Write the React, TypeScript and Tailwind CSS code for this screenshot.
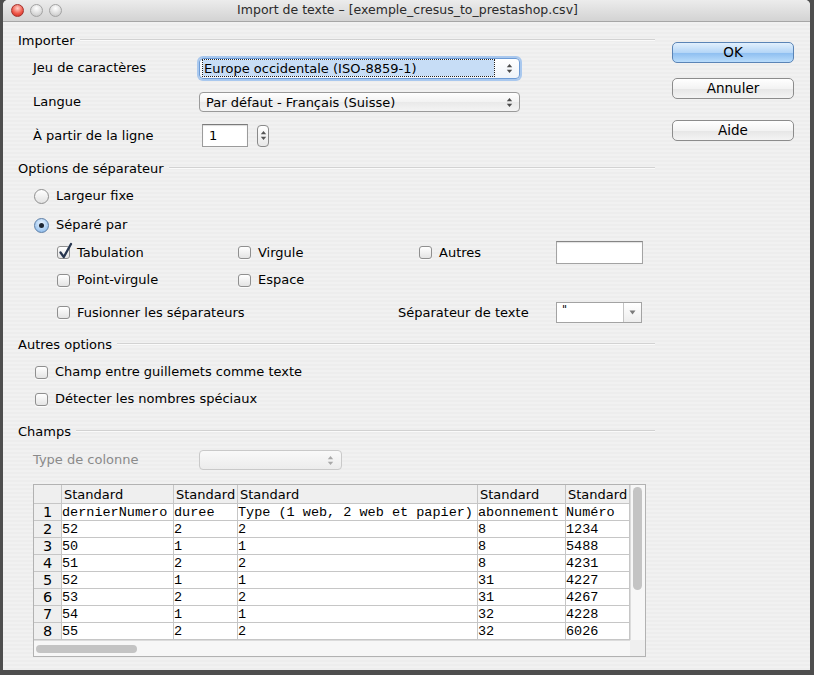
import React from 'react'

const sans = "font-['DejaVu_Sans',sans-serif]"
const mono = "font-['Liberation_Mono',monospace]"

const rows = [
  ['dernierNumero', 'duree', 'Type (1 web, 2 web et papier)', 'abonnement', 'Numéro'],
  ['52', '2', '2', '8', '1234'],
  ['50', '1', '1', '8', '5488'],
  ['51', '2', '2', '8', '4231'],
  ['52', '1', '1', '31', '4227'],
  ['53', '2', '2', '31', '4267'],
  ['54', '1', '1', '32', '4228'],
  ['55', '2', '2', '32', '6026'],
]

function UpDown({ color = '#4a4a4a' }: { color?: string }) {
  return (
    <svg width="7" height="11" viewBox="0 0 7 11">
      <path d="M3.5 1 L6.2 4.2 H0.8 Z" fill={color} />
      <path d="M3.5 10 L6.2 6.8 H0.8 Z" fill={color} />
    </svg>
  )
}

function SectionHeading({ title, className = '' }: { title: string; className?: string }) {
  return (
    <div className={`flex items-center h-[18px] ${className}`}>
      <span className="text-[13px] text-black leading-none">{title}</span>
      <div className="ml-[5px] flex-1 h-[2px] border-t border-b border-t-[#d2d2d2] border-b-[#fafafa]" />
    </div>
  )
}

function Checkbox({ checked = false }: { checked?: boolean }) {
  return (
    <span className="relative inline-block shrink-0 w-[13px] h-[13px] rounded-[3px] border border-[#8f8f8f] bg-[linear-gradient(#ffffff,#e4e4e4)] shadow-[0_1px_0_rgba(255,255,255,0.8)]">
      {checked && (
        <svg className="absolute left-[0px] top-[-5px]" width="16" height="18" viewBox="0 0 16 18">
          <path d="M2.5 10.5 L5.8 15 L13 2" fill="none" stroke="#27364f" strokeWidth="2.3" strokeLinecap="round" strokeLinejoin="round" />
        </svg>
      )}
    </span>
  )
}

function Radio({ checked = false }: { checked?: boolean }) {
  return checked ? (
    <span className="flex items-center justify-center shrink-0 w-[15px] h-[15px] rounded-full border border-[#5d7ea6] bg-[radial-gradient(circle_at_50%_35%,#eef6ff,#9ec6ef_70%,#7aaee6)]">
      <span className="w-[5px] h-[5px] rounded-full bg-[#1d2633]" />
    </span>
  ) : (
    <span className="shrink-0 w-[15px] h-[15px] rounded-full border border-[#8f8f8f] bg-[linear-gradient(#ffffff,#e2e2e2)]" />
  )
}

function CheckItem({ label, checked = false, className = '' }: { label: string; checked?: boolean; className?: string }) {
  return (
    <div className={`flex items-center ${className}`}>
      <Checkbox checked={checked} />
      <span className="ml-[7px] text-[13px] text-black">{label}</span>
    </div>
  )
}

function AquaButton({ label, primary = false, className = '' }: { label: string; primary?: boolean; className?: string }) {
  return (
    <div
      className={`flex items-center justify-center w-[122px] h-[21px] rounded-[5px] border text-[13.5px] text-black ${
        primary
          ? 'border-[#5a84b6] bg-[linear-gradient(#e2f0fd,#b5d6f7_50%,#8cbdf0_51%,#b9dcfb)]'
          : 'border-[#8c8c8c] bg-[linear-gradient(#ffffff,#f3f3f3_50%,#e6e6e6_51%,#f4f4f4)]'
      } ${className}`}
    >
      {label}
    </div>
  )
}

export default function App() {
  return (
    <div className={`w-[814px] h-[675px] bg-[#4e4e4e] overflow-hidden ${sans}`}>
      <div className="ml-[3px] w-[807px] h-[670px] rounded-t-[5px] overflow-hidden flex flex-col bg-[repeating-linear-gradient(0deg,#ededed_0px,#ededed_2px,#f1f1f1_2px,#f1f1f1_4px)]">
        {/* title bar */}
        <div className="relative h-[22px] shrink-0 flex items-center justify-center border-b border-[#a6a6a6] bg-[linear-gradient(#ececec,#d3d3d3)]">
          <div className="absolute left-[8px] top-[4px] flex gap-[6px]">
            <span className="w-[13px] h-[13px] rounded-full border border-[#a3322d] bg-[radial-gradient(circle_at_50%_30%,#ffd0c8,#f05a4c_55%,#c5241a)]" />
            <span className="w-[13px] h-[13px] rounded-full border border-[#a2a2a2] bg-[radial-gradient(circle_at_50%_30%,#ffffff,#dadada_60%,#bcbcbc)]" />
            <span className="w-[13px] h-[13px] rounded-full border border-[#a2a2a2] bg-[radial-gradient(circle_at_50%_30%,#ffffff,#dadada_60%,#bcbcbc)]" />
          </div>
          <span className="text-[12.5px] text-[#2a2a2a] ml-[2px]">Import de texte – [exemple_cresus_to_prestashop.csv]</span>
        </div>

        <div className="flex">
          {/* left column */}
          <div className="ml-[15px] w-[637px] flex flex-col">
            <SectionHeading title="Importer" className="mt-[9px]" />

            <div className="flex items-center h-[22px] mt-[8px]">
              <span className="w-[181px] pl-[15px] text-[13px]">Jeu de caractères</span>
              <div className="flex items-center w-[321px] h-[21px] rounded-[4px] border border-[#6c9bd6] shadow-[0_0_0_2px_#a9c8ee] bg-[linear-gradient(#ffffff,#eef3f9)] pl-[3px] pr-[6px]">
                <span className="flex-1 h-[16px] flex items-center bg-[#c7ddf6] outline-1 outline-dotted outline-[#222] text-[13px] leading-none pl-[1px] mr-[12px]">
                  Europe occidentale (ISO-8859-1)
                </span>
                <UpDown />
              </div>
            </div>

            <div className="flex items-center h-[22px] mt-[12px]">
              <span className="w-[181px] pl-[15px] text-[13px]">Langue</span>
              <div className="flex items-center w-[321px] h-[20px] rounded-[4px] border border-[#9a9a9a] bg-[linear-gradient(#ffffff,#f2f2f2_50%,#e9e9e9_51%,#f4f4f4)] pl-[6px] pr-[6px]">
                <span className="flex-1 text-[13px] leading-none">Par défaut - Français (Suisse)</span>
                <UpDown />
              </div>
            </div>

            <div className="flex items-center h-[23px] mt-[11px]">
              <span className="w-[184px] pl-[15px] text-[13px]">À partir de la ligne</span>
              <div className="flex items-center w-[46px] h-[23px] border border-[#9b9b9b] border-t-[#7a7a7a] bg-white pl-[6px] text-[13px] shadow-[inset_0_1px_1px_rgba(0,0,0,0.15)]">1</div>
              <div className="ml-[9px] flex items-center justify-center w-[12px] h-[22px] rounded-[4px] border border-[#8a8a8a] bg-[linear-gradient(#ffffff,#e8e8e8)]">
                <UpDown color="#555" />
              </div>
            </div>

            <SectionHeading title="Options de séparateur" className="mt-[12px]" />

            <div className="flex items-center h-[18px] mt-[10px] pl-[16px]">
              <Radio />
              <span className="ml-[7px] text-[13px]">Largeur fixe</span>
            </div>
            <div className="flex items-center h-[18px] mt-[11px] pl-[16px]">
              <Radio checked />
              <span className="ml-[7px] text-[13px]">Séparé par</span>
            </div>

            <div className="flex items-center h-[23px] mt-[7px] pl-[39px]">
              <CheckItem label="Tabulation" checked className="w-[181px]" />
              <CheckItem label="Virgule" className="w-[181px]" />
              <CheckItem label="Autres" className="w-[137px]" />
              <div className="w-[87px] h-[23px] border border-[#a3a3a3] border-t-[#858585] bg-white shadow-[inset_0_1px_1px_rgba(0,0,0,0.12)]" />
            </div>
            <div className="flex items-center h-[18px] mt-[7px] pl-[39px]">
              <CheckItem label="Point-virgule" className="w-[181px]" />
              <CheckItem label="Espace" className="w-[181px]" />
            </div>

            <div className="flex items-center h-[21px] mt-[13px] pl-[39px]">
              <CheckItem label="Fusionner les séparateurs" className="w-[341px]" />
              <span className="w-[158px] text-[13px]">Séparateur de texte</span>
              <div className="flex w-[86px] h-[21px] border border-[#a3a3a3] bg-white">
                <span className="flex-1 pl-[5px] text-[11px] leading-[14px]">"</span>
                <div className="w-[18px] border-l border-[#c4c4c4] flex items-center justify-center bg-[linear-gradient(#ffffff,#ededed)]">
                  <svg width="7" height="5" viewBox="0 0 7 5"><path d="M0.5 0.5 H6.5 L3.5 4.5 Z" fill="#7a7a7a" /></svg>
                </div>
              </div>
            </div>

            <SectionHeading title="Autres options" className="mt-[12px]" />
            <CheckItem label="Champ entre guillemets comme texte" className="h-[18px] mt-[10px] pl-[17px]" />
            <CheckItem label="Détecter les nombres spéciaux" className="h-[18px] mt-[9px] pl-[17px]" />

            <SectionHeading title="Champs" className="mt-[14px]" />

            <div className="flex items-center h-[20px] mt-[10px]">
              <span className="w-[181px] pl-[15px] text-[13px] text-[#8a8a8a]">Type de colonne</span>
              <div className="flex items-center justify-end w-[143px] h-[20px] rounded-[4px] border border-[#c9c9c9] bg-[linear-gradient(#f9f9f9,#ececec)] pr-[7px]">
                <UpDown color="#a8a8a8" />
              </div>
            </div>

            {/* preview table */}
            <div className="ml-[15px] mt-[14px] w-[613px] h-[173px] border border-[#b2b2b2] bg-[#f4f4f4] flex flex-col">
              <div className="flex h-[155px]">
                <div className="grid grid-cols-[28px_112px_64px_240px_88px_64px] grid-rows-[19px_repeat(8,17px)] w-[596px] bg-white">
                  <div className="bg-[#efefef] border-r border-b border-[#c6c6c6]" />
                  {[0, 1, 2, 3, 4].map((c) => (
                    <div key={c} className="bg-[#efefef] border-r border-b border-[#c6c6c6] pl-[2px] text-[13px] leading-[19px] overflow-hidden whitespace-nowrap">
                      Standard
                    </div>
                  ))}
                  {rows.map((r, i) => (
                    <React.Fragment key={i}>
                      <div className="bg-[#efefef] border-r border-b border-[#c6c6c6] flex items-center justify-center text-[14.5px] leading-none">{i + 1}</div>
                      {r.map((v, j) => (
                        <div key={j} className={`border-r border-b border-[#c6c6c6] ${mono} text-[13.5px] leading-[17px] whitespace-nowrap overflow-hidden`}>
                          {v}
                        </div>
                      ))}
                    </React.Fragment>
                  ))}
                </div>
                <div className="w-[15px] bg-[#f7f7f7] border-l border-[#dcdcdc] pt-[2px] pl-[2px]">
                  <div className="w-[9px] h-[103px] rounded-full bg-[#c4c4c4]" />
                </div>
              </div>
              <div className="flex flex-1">
                <div className="w-[596px] bg-[#f7f7f7] border-t border-[#dcdcdc] pt-[4px] pl-[2px]">
                  <div className="w-[101px] h-[8px] rounded-full bg-[#c4c4c4]" />
                </div>
                <div className="flex-1 bg-[#efefef]" />
              </div>
            </div>
          </div>

          {/* right column */}
          <div className="ml-[17px] pt-[20px] flex flex-col">
            <AquaButton label="OK" primary />
            <AquaButton label="Annuler" className="mt-[15px]" />
            <AquaButton label="Aide" className="mt-[21px]" />
          </div>
        </div>
      </div>
    </div>
  )
}
